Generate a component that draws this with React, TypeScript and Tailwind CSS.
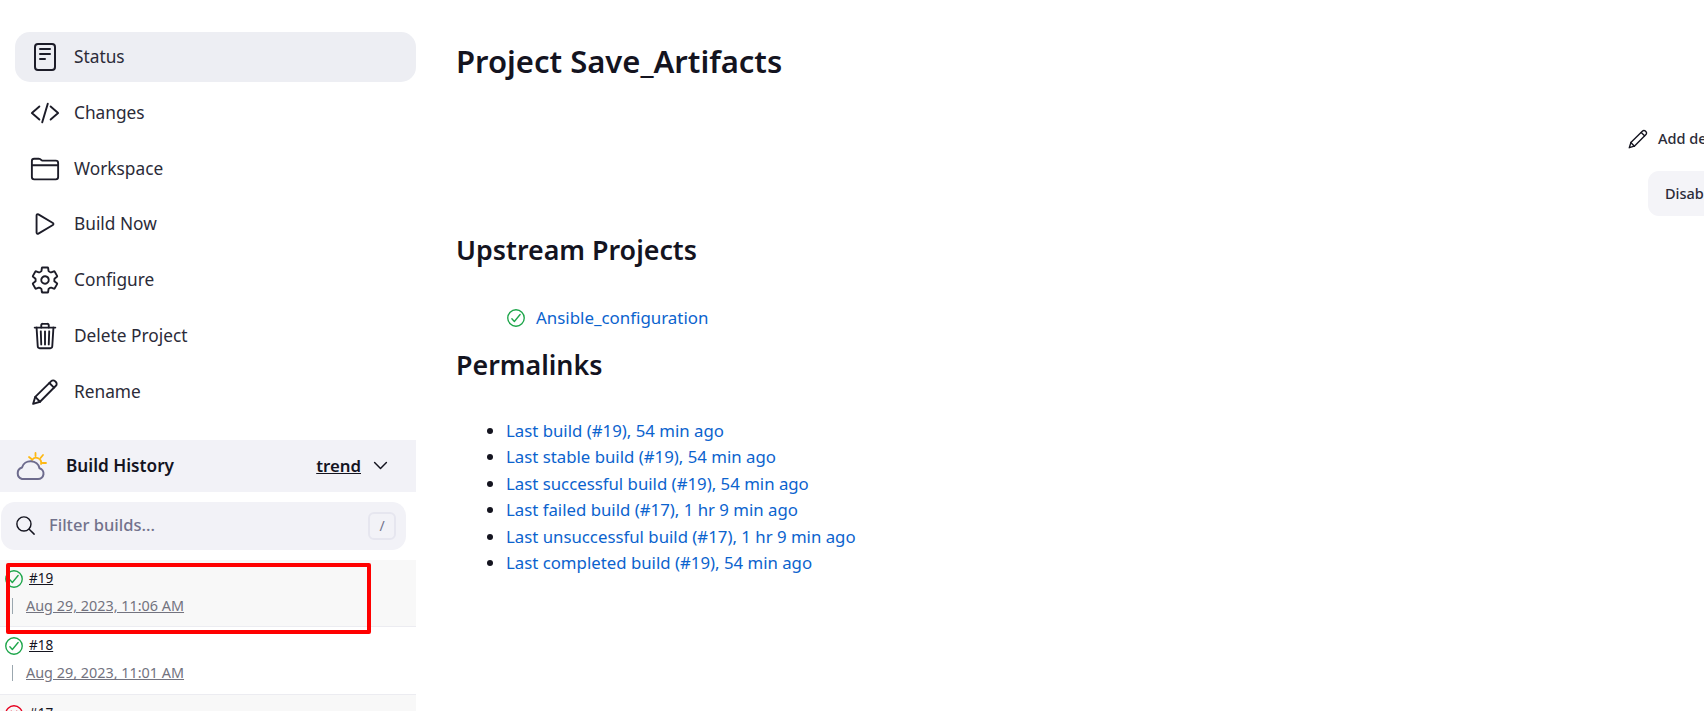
import React from 'react';
import {
  IoReaderOutline,
  IoCodeSlashOutline,
  IoFolderOutline,
  IoPlayOutline,
  IoSettingsOutline,
  IoTrashOutline,
  IoSearchOutline,
  IoChevronDownOutline,
  IoCheckmarkCircleOutline,
  IoCloseCircleOutline,
} from 'react-icons/io5';

const PencilIcon: React.FC<{ className?: string }> = ({ className }) => (
  <svg viewBox="0 0 24 24" className={className} fill="none" stroke="currentColor" strokeWidth="1.5" strokeLinejoin="round" strokeLinecap="round">
    <path d="M2.5 21.5l1.7-5.6L17 3.3a2.1 2.1 0 0 1 3 0l.7.7a2.1 2.1 0 0 1 0 3L8 19.8z" />
    <path d="M15.5 4.8l3.7 3.7M4.2 15.9L8 19.8" />
  </svg>
);

const navItems = [
  { label: 'Status', icon: IoReaderOutline, size: 'w-[32px] h-[32px] -mx-[1px]', active: true },
  { label: 'Changes', icon: IoCodeSlashOutline, size: 'w-[30px] h-[30px]' },
  { label: 'Workspace', icon: IoFolderOutline, size: 'w-[30px] h-[30px]' },
  { label: 'Build Now', icon: IoPlayOutline, size: 'w-[30px] h-[30px]' },
  { label: 'Configure', icon: IoSettingsOutline, size: 'w-[30px] h-[30px]' },
  { label: 'Delete Project', icon: IoTrashOutline, size: 'w-[30px] h-[30px]' },
  { label: 'Rename', icon: PencilIcon, size: 'w-[30px] h-[30px]' },
];

const builds = [
  { id: '#19', date: 'Aug 29, 2023, 11:06 AM', ok: true, shaded: true },
  { id: '#18', date: 'Aug 29, 2023, 11:01 AM', ok: true, shaded: false },
  { id: '#17', date: 'Aug 29, 2023, 10:51 AM', ok: false, shaded: true },
];

const permalinks = [
  'Last build (#19), 54 min ago',
  'Last stable build (#19), 54 min ago',
  'Last successful build (#19), 54 min ago',
  'Last failed build (#17), 1 hr 9 min ago',
  'Last unsuccessful build (#17), 1 hr 9 min ago',
  'Last completed build (#19), 54 min ago',
];

const WeatherIcon = () => (
  <svg viewBox="0 0 32 32" className="w-[32px] h-[32px] shrink-0" fill="none" strokeLinecap="round">
    <g stroke="#fdb813" strokeWidth="1.8">
      <path d="M17 10a5 5 0 0 1 9 4" />
      <path d="M20.5 3v3M14 7l2.5 2M28 5l-2.5 3M31 13h-3.5" />
    </g>
    <path d="M7 29h16a5.5 5.5 0 0 0 1.5-10.8A9 8.5 0 0 0 7 17.5a6 6 0 0 0 0 11.5z" fill="#f2f2f7" stroke="#6d6b8d" strokeWidth="2" strokeLinejoin="round" />
  </svg>
);

const App: React.FC = () => {
  return (
    <div className="relative flex h-[711px] w-[1704px] overflow-hidden bg-white text-[#14141f] font-['Noto_Sans','Open_Sans',sans-serif]">
      <aside className="w-[416px] shrink-0 flex flex-col pt-[32px]">
        <nav className="flex flex-col gap-[5.8px] pl-[15px] shrink-0">
          {navItems.map(item => {
            const Icon = item.icon;
            return (
              <a
                key={item.label}
                href="#"
                className={`h-[50px] shrink-0 rounded-[15px] flex items-center pl-[15px] text-[17.3px] text-[#2b2b38] ${item.active ? 'bg-[#edeef3]' : ''}`}
              >
                <Icon className={`${item.size} text-[#1c1c28] shrink-0`} />
                <span className="ml-[14px]">{item.label}</span>
              </a>
            );
          })}
        </nav>

        <div className="mt-[23px] h-[52px] shrink-0 bg-[#f2f2f7] flex items-center pl-[15px]">
          <WeatherIcon />
          <span className="ml-[19px] font-semibold text-[17.2px]">Build History</span>
          <a href="#" className="ml-auto font-semibold text-[16.8px] underline">trend</a>
          <IoChevronDownOutline className="w-[21px] h-[21px] ml-[9px] mr-[25px] [&_path]:stroke-[36px]" />
        </div>

        <div className="mt-[10px] ml-[1px] w-[405px] h-[48px] shrink-0 rounded-[14px] bg-[#f2f2f7] flex items-center pl-[13px] pr-[10px]">
          <IoSearchOutline className="w-[23px] h-[23px] text-[#14141f]" />
          <span className="ml-[12px] text-[16.5px] font-medium text-[#72728c]">Filter builds...</span>
          <span className="ml-auto w-[28px] h-[28px] rounded-[6px] border-2 border-[#e6e6ef] text-[#72728c] text-[14px] flex items-center justify-center">/</span>
        </div>

        <div className="mt-[10px] flex flex-col shrink-0">
          {builds.map(build => (
            <div
              key={build.id}
              className={`h-[67.5px] shrink-0 pl-[3px] pt-[8px] border-b border-[#ececf1] ${build.shaded ? 'bg-[#f8f8f8]' : 'bg-white'}`}
            >
              <div className="flex items-center h-[22px]">
                {build.ok ? (
                  <IoCheckmarkCircleOutline className="w-[22px] h-[22px] text-[#1ea64b]" />
                ) : (
                  <IoCloseCircleOutline className="w-[22px] h-[22px] text-[#e6001f]" />
                )}
                <a href="#" className="ml-[4px] -mt-[2px] text-[13.5px] underline">{build.id}</a>
              </div>
              <div className="flex items-center mt-[6px] ml-[9px] h-[20px]">
                <span className="w-px h-[16px] bg-[#9ba7af]" />
                <a href="#" className="ml-[13px] text-[14.4px] text-[#73737f] underline">{build.date}</a>
              </div>
            </div>
          ))}
        </div>
      </aside>

      <main className="flex-1 min-w-0 pl-[40px] pt-[40px]">
        <h1 className="text-[31px] font-semibold leading-[42px]">Project Save_Artifacts</h1>

        <div className="ml-[1171px] mt-[47px] w-[300px]">
          <a href="#" className="flex items-center h-[20px] text-[14.5px] font-medium text-[#2b2b38]">
            <PencilIcon className="w-[22px] h-[22px] mr-[9px] text-[#14141f]" />
            Add description
          </a>
          <button className="mt-[22px] ml-[21px] h-[45px] px-[17px] rounded-[11px] bg-[#f4f4f8] text-[14.5px] font-medium text-[#2b2b38] flex items-center">
            Disable Project
          </button>
        </div>

        <h2 className="mt-[15px] text-[26.8px] font-semibold leading-[38px]">Upstream Projects</h2>
        <div className="mt-[36px] ml-[49px] flex items-center h-[26px]">
          <IoCheckmarkCircleOutline className="w-[22px] h-[22px] text-[#1ea64b]" />
          <a href="#" className="ml-[9px] text-[16.9px] text-[#0b63ce]">Ansible_configuration</a>
        </div>

        <h2 className="mt-[15px] text-[26.8px] font-semibold leading-[38px]">Permalinks</h2>
        <ul className="mt-[34px] list-disc pl-[50px] text-[16.8px] leading-[26.4px] text-[#0b63ce] marker:text-[#14141f]">
          {permalinks.map(link => (
            <li key={link}><a href="#">{link}</a></li>
          ))}
        </ul>
      </main>

      <div className="absolute left-[6px] top-[563px] w-[365px] h-[71px] border-[4px] border-[#ff0000] rounded-[2px] pointer-events-none" />
    </div>
  );
};

export default App;
